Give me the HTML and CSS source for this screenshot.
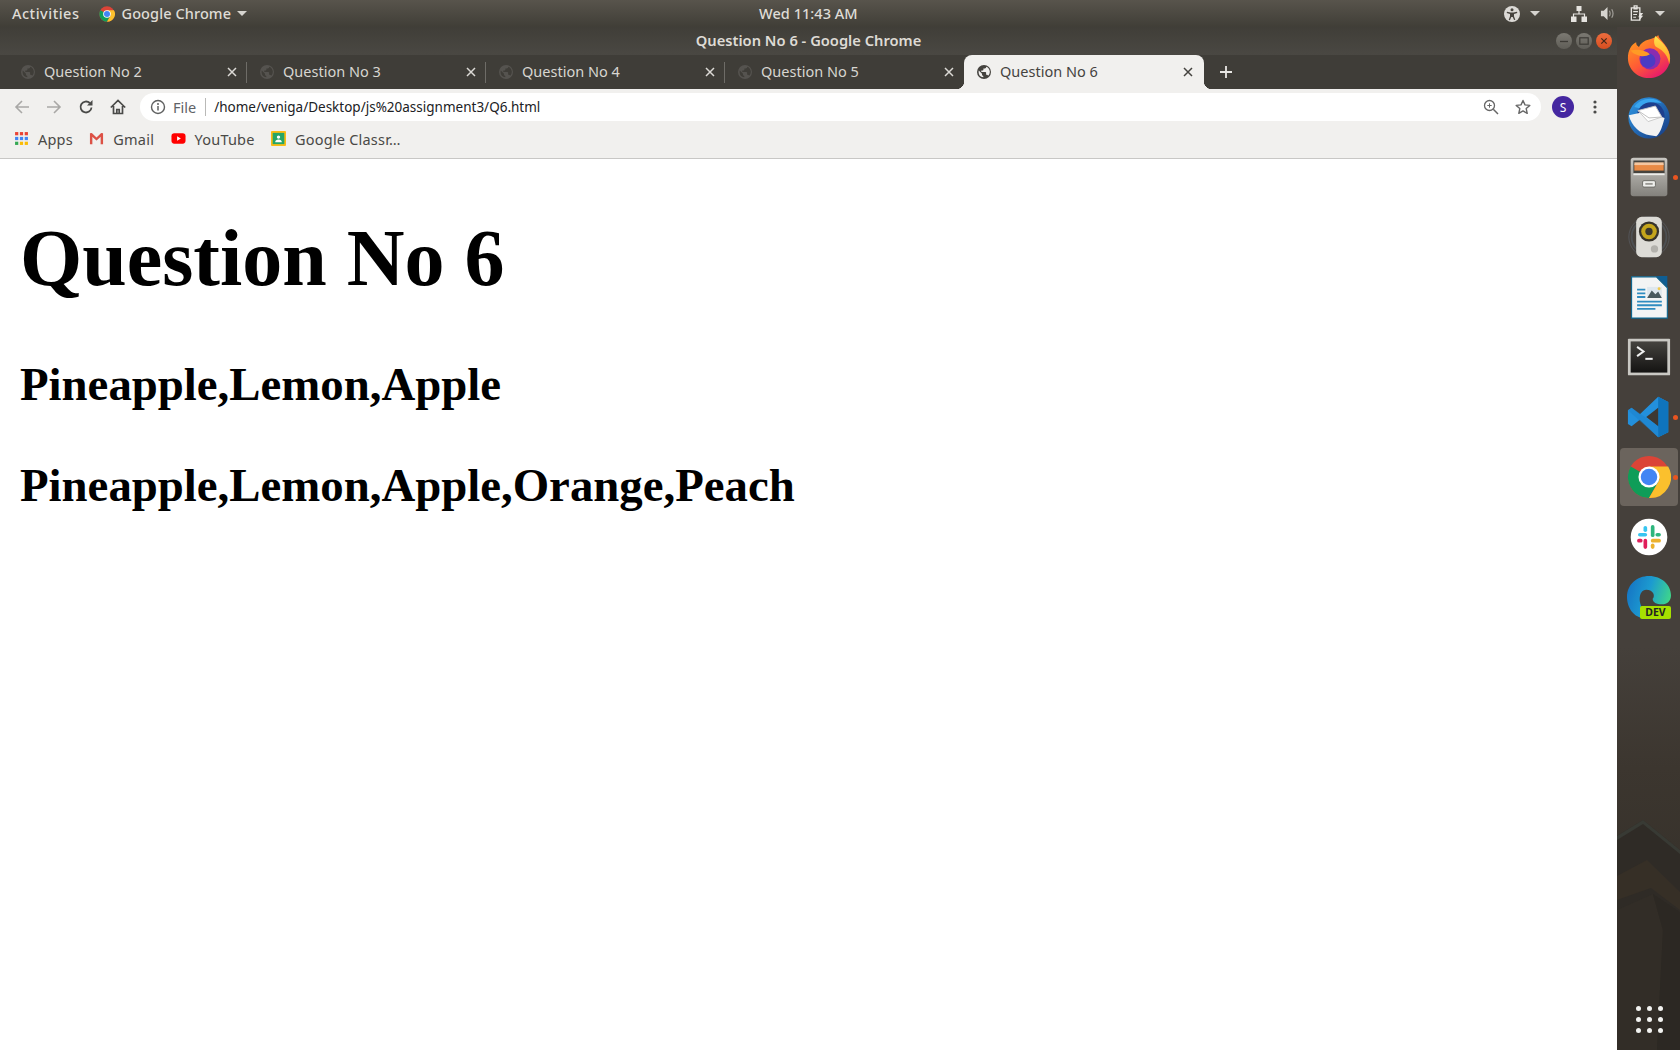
FILE: index.html
```html
<!DOCTYPE html>
<html lang="en">
<head>
<meta charset="utf-8">
<title>Question No 6</title>
<link rel="stylesheet" href="styles.css">
</head>
<body>
<svg class="defs" width="0" height="0" aria-hidden="true">
  <defs>
    <symbol id="chrome" viewBox="0 0 48 48">
      <circle cx="24" cy="24" r="23" fill="#db4437"/>
      <path d="M24 24 L4.1 12.5 A23 23 0 0 0 24 47 L35.5 27Z" fill="#0f9d58"/>
      <path d="M24 12.5 H44.9 A23 23 0 0 1 24 47 L35.5 27Z" fill="#fbc02d"/>
      <circle cx="24" cy="24" r="11.5" fill="#fff"/>
      <circle cx="24" cy="24" r="9" fill="#4285f4"/>
    </symbol>
    <symbol id="globe" viewBox="0 0 16 16">
      <path fill="currentColor" fill-rule="evenodd" d="M8 1a7 7 0 1 0 0 14A7 7 0 0 0 8 1zM2.6 8c0-.5.1-1 .2-1.400L6 9.800v.7c0 .8.6 1.400 1.300 1.400v1.400A5.400 5.400 0 0 1 2.600 8zm9.500 3.700c-.2-.6-.7-1-1.300-1h-.7V8.600c0-.4-.3-.7-.7-.7H5.300V6.500h1.400c.4 0 .7-.3.700-.7V4.400h1.400c.8 0 1.400-.6 1.400-1.400v-.3a5.400 5.400 0 0 1 1.900 9z"/>
    </symbol>
    <symbol id="close" viewBox="0 0 10 10">
      <path d="M1 1l8 8M9 1l-8 8" fill="none" stroke="currentColor" stroke-width="1.500"/>
    </symbol>
    <linearGradient id="ff" x1="0.1" y1="0.1" x2="0.7" y2="1">
      <stop offset="0" stop-color="#ff9a1f"/><stop offset="0.55" stop-color="#ff5a36"/><stop offset="1" stop-color="#e7186d"/>
    </linearGradient>
    <linearGradient id="ffy" x1="0.5" y1="0" x2="0.5" y2="1">
      <stop offset="0" stop-color="#ffe34d"/><stop offset="1" stop-color="#ff9a1f"/>
    </linearGradient>
    <linearGradient id="tb" x1="0" y1="0" x2="1" y2="1">
      <stop offset="0" stop-color="#2f9be8"/><stop offset="1" stop-color="#17387f"/>
    </linearGradient>
    <linearGradient id="steel" x1="0" y1="0" x2="0" y2="1">
      <stop offset="0" stop-color="#c9c7c2"/><stop offset="1" stop-color="#83817c"/>
    </linearGradient>
    <linearGradient id="edge" x1="0" y1="0.2" x2="1" y2="0.5">
      <stop offset="0" stop-color="#1573c4"/><stop offset="0.5" stop-color="#1c9bd0"/><stop offset="1" stop-color="#3fd68a"/>
    </linearGradient>
    <linearGradient id="term" x1="0" y1="0" x2="0" y2="1">
      <stop offset="0" stop-color="#45433f"/><stop offset="1" stop-color="#141312"/>
    </linearGradient>
  </defs>
</svg>

<div class="screen">
  <header class="topbar">
    <div class="top-left">
      <span class="top-label activities">Activities</span>
      <svg class="top-chrome"><use href="#chrome"/></svg>
      <span class="top-label app-name">Google Chrome</span>
      <span class="caret caret-app"></span>
    </div>
    <div class="top-label clock">Wed 11:43 AM</div>
    <div class="top-right">
      <svg class="tray tray-a11y" viewBox="0 0 16 16"><circle cx="8" cy="8" r="8" fill="#dcdad6"/><circle cx="8" cy="3.800" r="1.500" fill="#47443e"/><path d="M3 5.800l3.600.8h2.800l3.600-.8.300 1.200-3.300 1v2.200l1.300 3.500-1.200.4L8.700 11H7.300l-1.400 3.300-1.200-.4L6 10.200V8L2.700 7z" fill="#47443e"/></svg>
      <span class="caret caret-a11y"></span>
      <svg class="tray tray-net" viewBox="0 0 16 16"><path fill="none" stroke="#e6e4e0" stroke-width="1.200" d="M8 4v4M2.500 11V8h11v3"/><rect x="5.500" y="0" width="5" height="5" fill="#e6e4e0"/><rect x="0" y="10.500" width="5.500" height="5.500" fill="#e6e4e0"/><rect x="10.500" y="10.500" width="5.500" height="5.500" fill="#e6e4e0"/></svg>
      <svg class="tray tray-vol" viewBox="0 0 16 16"><path fill="#d6d4cf" d="M1 5h3l4-4v14l-4-4H1z"/><path d="M10 5c1 1.800 1 4.200 0 6M12.500 3.500c1.700 2.700 1.700 6.300 0 9" fill="none" stroke="#d6d4cf" stroke-width="1.300" opacity=".6"/></svg>
      <svg class="tray tray-clip" viewBox="0 0 14 18"><path fill="none" stroke="#e6e4e0" stroke-width="1.400" d="M1 3h9v13H1zM4 1h3v3H4z"/><path stroke="#e6e4e0" stroke-width="1.200" d="M3 7h5M3 10h4M3 13h3"/><path fill="#e6e4e0" d="M10 8.500h3.500l-2 3h2L9 17l1-4H8.500z"/></svg>
      <span class="caret caret-power"></span>
    </div>
  </header>

  <div class="desk">
    <main class="window">
      <div class="titlebar">
        <span></span>
        <div class="title">Question No 6 - Google Chrome</div>
        <div class="win-buttons">
          <span class="win-btn"><svg viewBox="0 0 16 16"><path d="M4 8.500h8" stroke="#3d3b36" stroke-width="1.300"/></svg></span>
          <span class="win-btn"><svg viewBox="0 0 16 16"><rect x="3.800" y="4.800" width="8.400" height="6.400" fill="none" stroke="#3d3b36" stroke-width="1.200"/></svg></span>
          <span class="win-btn win-close"><svg viewBox="0 0 16 16"><path d="M5.300 5.300l5.400 5.400M10.700 5.300l-5.400 5.400" stroke="#43281a" stroke-width="1.200"/></svg></span>
        </div>
      </div>

      <div class="tabstrip">
        <div class="tab"><svg class="favicon"><use href="#globe"/></svg><span class="tab-title">Question No 2</span><svg class="tab-close"><use href="#close"/></svg></div>
        <div class="tab"><svg class="favicon"><use href="#globe"/></svg><span class="tab-title">Question No 3</span><svg class="tab-close"><use href="#close"/></svg></div>
        <div class="tab"><svg class="favicon"><use href="#globe"/></svg><span class="tab-title">Question No 4</span><svg class="tab-close"><use href="#close"/></svg></div>
        <div class="tab tab-last"><svg class="favicon"><use href="#globe"/></svg><span class="tab-title">Question No 5</span><svg class="tab-close"><use href="#close"/></svg></div>
        <div class="tab tab-active"><svg class="favicon"><use href="#globe"/></svg><span class="tab-title">Question No 6</span><svg class="tab-close"><use href="#close"/></svg></div>
        <svg class="new-tab" viewBox="0 0 14 14"><path d="M7 1v12M1 7h12" stroke="#e8e7e4" stroke-width="1.800" fill="none"/></svg>
      </div>

      <div class="toolbar">
        <span class="tool"><svg viewBox="0 0 16 16"><path d="M15 8H2M8 2L2 8l6 6" fill="none" stroke="#a9a8a6" stroke-width="1.600"/></svg></span>
        <span class="tool"><svg viewBox="0 0 16 16"><path d="M1 8h13M8 2l6 6-6 6" fill="none" stroke="#a9a8a6" stroke-width="1.600"/></svg></span>
        <span class="tool"><svg viewBox="0 0 16 16"><path d="M13.500 8.500A5.500 5.500 0 1 1 11.800 4" fill="none" stroke="#4a4a48" stroke-width="1.800"/><path d="M14.500 1v5.500H9z" fill="#4a4a48"/></svg></span>
        <span class="tool"><svg viewBox="0 0 16 16"><path d="M.8 8.500L8 1.500l7.200 7M3.500 7v7.500h9V7M6.800 14.500v-4h2.400v4" fill="none" stroke="#4a4a48" stroke-width="1.700"/></svg></span>
        <div class="omnibox">
          <svg class="omni-info" viewBox="0 0 16 16"><circle cx="8" cy="8" r="6.500" fill="none" stroke="#5f6060" stroke-width="1.400"/><path d="M8 7v4.500" stroke="#5f6060" stroke-width="1.500"/><circle cx="8" cy="4.900" r="1" fill="#5f6060"/></svg>
          <span class="omni-scheme">File</span>
          <span class="omni-divider"></span>
          <span class="omni-url">/home/veniga/Desktop/js%20assignment3/Q6.html</span>
          <svg class="omni-icon omni-zoom" viewBox="0 0 16 16"><circle cx="6.500" cy="6.500" r="5" fill="none" stroke="#666" stroke-width="1.300"/><path d="M10.300 10.300L15 15" stroke="#666" stroke-width="1.500"/><path d="M4.300 6.500h4.400M6.500 4.300v4.400" stroke="#666" stroke-width="1"/></svg>
          <svg class="omni-icon omni-star" viewBox="0 0 16 16"><path d="M8 1.500l2 4.400 4.800.5-3.600 3.200 1 4.700L8 11.900l-4.200 2.400 1-4.700L1.200 6.400 6 5.900z" fill="none" stroke="#666" stroke-width="1.400" stroke-linejoin="round"/></svg>
        </div>
        <span class="tool"><span class="avatar">S</span></span>
        <span class="tool"><svg viewBox="0 0 16 16"><circle cx="8" cy="3" r="1.600" fill="#4a4a48"/><circle cx="8" cy="8" r="1.600" fill="#4a4a48"/><circle cx="8" cy="13" r="1.600" fill="#4a4a48"/></svg></span>
      </div>

      <nav class="bookmarks">
        <span class="bm">
          <svg class="bm-icon" viewBox="0 0 14 14">
            <rect x="1" y="1" width="3" height="3" fill="#ea4335"/><rect x="5.500" y="1" width="3" height="3" fill="#ea4335"/><rect x="10" y="1" width="3" height="3" fill="#ea4335"/>
            <rect x="1" y="5.500" width="3" height="3" fill="#4285f4"/><rect x="5.500" y="5.500" width="3" height="3" fill="#4285f4"/><rect x="10" y="5.500" width="3" height="3" fill="#4285f4"/>
            <rect x="1" y="10" width="3" height="3" fill="#34a853"/><rect x="5.500" y="10" width="3" height="3" fill="#fbbc05"/><rect x="10" y="10" width="3" height="3" fill="#fbbc05"/>
          </svg>Apps</span>
        <span class="bm">
          <svg class="bm-icon" viewBox="0 0 16 14"><path d="M1.500 13V2h1.700L8 6.500 12.800 2h1.700v11h-2.700V6.200L8 9.500 4.200 6.200V13z" fill="#e4e2e0"/><path d="M1 13V1.500L3 1l5 5 5-5 2 .5V13h-2.500V5L8 9.200 3.500 5v8z" fill="#dd5145"/></svg>Gmail</span>
        <span class="bm">
          <svg class="bm-icon" viewBox="0 0 16 14"><rect x="0.500" y="1.500" width="15" height="11" rx="3" fill="#f00"/><path d="M6.500 4.500l4 2.500-4 2.500z" fill="#fff"/></svg>YouTube</span>
        <span class="bm">
          <svg class="bm-icon" viewBox="0 0 16 16"><rect width="16" height="16" rx="1" fill="#f9bc15"/><rect x="1.800" y="2" width="12.400" height="12" fill="#25a667"/><circle cx="8" cy="6.500" r="1.800" fill="#fff"/><path d="M4.500 12c0-2 1.500-3 3.500-3s3.500 1 3.500 3z" fill="#fff"/></svg>Google Classr…</span>
      </nav>

      <section class="page">
        <h1>Question No 6</h1>
        <h3>Pineapple,Lemon,Apple</h3>
        <h3>Pineapple,Lemon,Apple,Orange,Peach</h3>
      </section>
    </main>

    <aside class="dock">
      <svg class="dock-wall" viewBox="0 0 63 290" preserveAspectRatio="none" aria-hidden="true">
        <path d="M0 76 L26 60 L63 90 V290 H0Z" fill="#2f2b26"/>
        <path d="M0 76 L26 60 L63 90 L63 94 L26 64 L0 80Z" fill="#383a34"/>
        <path d="M0 116 L30 100 L63 132 V150 L34 128 L0 140Z" fill="#362f26"/>
        <path d="M0 150 L36 134 L46 170 L40 290 H0Z" fill="#322d27"/>
        <path d="M36 134 L63 152 V290 H40 L46 170Z" fill="#2c2823"/>
      </svg>
      <div class="dock-item"><svg viewBox="0 0 48 48">
        <path d="M24 5c8-2 10-5 10-5 1 4 4 6 7 10 4 5 6 10 6 15 0 12-10 22-23 22S1 37 1 25C1 17 5 10 10 8c0 3 1 4 3 5 2-4 6-7 11-8z" fill="url(#ff)"/>
        <path d="M31 1c5 5 16 13 16 25 0 2-.5 4-1 6-1-9-6-15-14-19-3-2-3-8-1-12z" fill="url(#ffy)"/>
        <circle cx="25" cy="26" r="11.500" fill="#8a2cb0"/>
        <circle cx="23" cy="28" r="8" fill="#4b3bc4"/>
        <path d="M4 17c4-1 10-2 16 1 3 1 5 3 5 3-3 2-9 3-13 1-4-1-7-3-8-5z" fill="#ff9b25"/>
      </svg></div>
      <div class="dock-item"><svg viewBox="0 0 48 48">
        <circle cx="24" cy="25" r="22.500" fill="url(#tb)"/>
        <path d="M8 13C14 3 30 1 38 9c-8-2-18 0-22 6z" fill="#39a6ef"/>
        <circle cx="26" cy="23" r="15" fill="#1d3f8e"/>
        <path d="M2 22l19-4 20 7c-2 8-5 17-9 20l-7-1C14 42 5 34 2 22z" fill="#f2f2f2"/>
        <path d="M12 17l19-5 7 12-15 5z" fill="#fff" stroke="#c7c7c7" stroke-width="1"/>
        <path d="M12 17l12 8 14-1" fill="none" stroke="#bbb" stroke-width="1"/>
      </svg></div>
      <div class="dock-item dock-running"><svg viewBox="0 0 48 48">
        <rect x="4" y="3" width="40" height="42" rx="3" fill="url(#steel)"/>
        <rect x="7" y="6" width="34" height="14" fill="#45433e"/>
        <rect x="8" y="10" width="32" height="7" fill="#e98a45"/>
        <rect x="8" y="8" width="32" height="3" fill="#f5c6a0"/>
        <rect x="7" y="20" width="34" height="2" fill="#eeeeea"/>
        <rect x="17" y="28" width="14" height="7" rx="1.500" fill="#efefec" stroke="#6a6964"/>
        <rect x="20" y="30.500" width="8" height="2" fill="#9a9994"/>
      </svg></div>
      <div class="dock-item"><svg viewBox="0 0 48 48">
        <circle cx="24" cy="24" r="22" fill="none" stroke="#5a6068" stroke-width="1" opacity=".7"/>
        <circle cx="24" cy="24" r="19" fill="none" stroke="#5a6a78" stroke-width="2" opacity=".4"/>
        <rect x="10" y="2" width="28" height="44" rx="6" fill="#dcdbd6"/>
        <circle cx="24" cy="18" r="11" fill="#36332c"/>
        <circle cx="24" cy="18" r="8.500" fill="#c4a51c"/>
        <circle cx="24" cy="18" r="4" fill="#3b382f"/>
        <circle cx="30" cy="37" r="4" fill="#b2b1ac"/>
      </svg></div>
      <div class="dock-item"><svg viewBox="0 0 48 48">
        <path d="M5 2h27l12 12v33H5z" fill="#f3f4f4" stroke="#0d6690" stroke-width="1.200"/>
        <path d="M32 1h12v12z" fill="#0f5e93"/>
        <rect x="22" y="13" width="16" height="12" fill="#dfe8ee"/>
        <path d="M22 25l5-8 4 4 3-3 4 7z" fill="#4a5a5e"/>
        <circle cx="35" cy="15" r="1.600" fill="#f2c94c"/>
        <path d="M11 15h9v2h-9zM11 19h9v2h-9zM11 23h9v2h-9zM11 28h27v2H11zM11 32h27v2H11zM11 36h20v2H11z" fill="#2f8cc0"/>
      </svg></div>
      <div class="dock-item"><svg viewBox="0 0 48 48">
        <rect x="1" y="4" width="46" height="40" rx="1" fill="#c9c8c3"/>
        <rect x="4" y="7" width="40" height="34" fill="url(#term)"/>
        <path d="M11 13l7 5-7 5" fill="none" stroke="#f0f0f0" stroke-width="2.200"/>
        <path d="M20 26h8" stroke="#f0f0f0" stroke-width="2.200"/>
      </svg></div>
      <div class="dock-item dock-running"><svg viewBox="0 0 48 48">
        <path d="M34 2l11 5.500v33L34 46 14 27 5 34l-4-2.500V16.500L5 14l9 7z" fill="#2390dc"/>
        <path d="M34 2l11 5.500v33L34 46z" fill="#0f74bd"/>
        <path d="M34 14v20l-13-10z" fill="#3d3833"/>
        <path d="M5 14l29 20v12L1 16.500z" fill="#1d82cc" opacity=".55"/>
      </svg></div>
      <div class="dock-item dock-running dock-active"><svg viewBox="0 0 48 48"><use href="#chrome"/></svg></div>
      <div class="dock-item"><svg viewBox="0 0 48 48">
        <circle cx="24" cy="24" r="20" fill="#fff"/>
        <rect x="12" y="19.500" width="10" height="4" rx="2" fill="#36c5f0"/><rect x="18" y="12" width="4" height="6.500" rx="2" fill="#36c5f0"/>
        <rect x="26" y="11" width="4" height="13" rx="2" fill="#2eb67d"/><rect x="31" y="19.500" width="6" height="4" rx="2" fill="#2eb67d"/>
        <rect x="26" y="26" width="11" height="4" rx="2" fill="#ecb22e"/><rect x="26" y="31" width="4" height="6" rx="2" fill="#ecb22e"/>
        <rect x="18" y="26" width="4" height="11" rx="2" fill="#e01e5a"/><rect x="11" y="26" width="6" height="4" rx="2" fill="#e01e5a"/>
      </svg></div>
      <div class="dock-item dock-edge">
        <svg viewBox="0 0 48 48">
          <path d="M0 24C0 10 11 1 24 1c14 0 24 10 24 21 0 6-4 10-10 10-6 0-10-2-10-6 3-3 1-10-7-10C12 16 10 34 24 44c-1 2-3 3-5 3C8 47 0 36 0 24z" fill="url(#edge)"/>
        </svg>
        <span class="dev-badge">DEV</span>
      </div>
      <div class="dock-grid">
        <i></i><i></i><i></i><i></i><i></i><i></i><i></i><i></i><i></i>
      </div>
    </aside>
  </div>
</div>
</body>
</html>
```

FILE: styles.css
```css
* { box-sizing: border-box; }
html, body { margin: 0; height: 100%; background: #fff; }
.defs { position: absolute; }
.screen {
  width: 1680px; height: 1050px; overflow: hidden;
  display: flex; flex-direction: column;
  font-family: "Noto Sans", "Open Sans", sans-serif;
}

/* GNOME top bar */
.topbar {
  height: 27px; flex: none;
  display: grid; grid-template-columns: 759px auto 1fr; align-items: center;
  background: linear-gradient(#58544c, #403e37);
}
.top-left, .top-right { display: flex; align-items: center; }
.top-label { font-size: 14.5px; font-weight: 500; color: #dfdcd6; white-space: nowrap; margin-top: -2px; }
.activities { margin-left: 12px; letter-spacing: 0.5px; }
.app-name { letter-spacing: 0.1px; }
.clock { letter-spacing: 0.05px; }
.top-chrome { width: 16px; height: 16px; margin: 0 6px 0 20px; }
.caret { width: 0; height: 0; border-left: 5px solid transparent; border-right: 5px solid transparent; border-top: 5px solid #d6d4cf; }
.caret-app { margin-left: 6px; }
.top-right { justify-content: flex-end; padding-right: 15px; }
.tray { display: block; }
.tray-a11y { width: 16px; height: 16px; }
.caret-a11y { margin: 0 31px 0 10px; }
.tray-net { width: 16px; height: 16px; }
.tray-vol { width: 15px; height: 15px; margin-left: 13px; }
.tray-clip { width: 14px; height: 17px; margin-left: 15px; }
.caret-power { margin-left: 11px; }

/* Desk: browser + dock */
.desk { flex: 1; display: flex; min-height: 0; }
.window { flex: 1; min-width: 0; display: flex; flex-direction: column; }

.titlebar {
  height: 28px; flex: none;
  display: grid; grid-template-columns: 1fr auto 1fr; align-items: center;
  background: linear-gradient(#403e38, #4a4843);
}
.title { font-size: 14.7px; font-weight: 600; color: #dedbd5; margin-top: -3px; }
.win-buttons { display: flex; justify-content: flex-end; gap: 4px; padding-right: 5px; }
.win-btn { width: 16px; height: 16px; border-radius: 50%; background: linear-gradient(#7b7972, #5f5d57); display: block; }
.win-btn svg { display: block; }
.win-close { background: linear-gradient(#ee6d3e, #d64e20); }

.tabstrip {
  height: 34px; flex: none; display: flex; align-items: center;
  padding-left: 8px; background: #3f3d38;
}
.tab {
  width: 239px; height: 100%; flex: none; padding-bottom: 1px;
  display: flex; align-items: center; padding-left: 12px;
  position: relative; color: #d8d6d1;
}
.tab::after {
  content: ""; position: absolute; right: 0; top: 7px; bottom: 6px; width: 1px; background: #6e6c67;
}
.tab-last::after { display: none; }
.favicon { width: 16px; height: 16px; margin-right: 8px; flex: none; color: #55534f; }
.tab-title { flex: 1; font-size: 14.5px; white-space: nowrap; margin-top: -2px; }
.tab-close { width: 10px; height: 10px; margin-right: 10px; flex: none; color: #dcdad6; }
.tab-active {
  background: #f1f0ee; color: #45433f; border-radius: 8px 8px 0 0; width: 240px;
}
.tab-active .tab-close { margin-right: 11px; }
.tab-active::after {
  top: auto; bottom: 0; right: -8px; width: 8px; height: 8px;
  background: radial-gradient(circle at 100% 0, transparent 8px, #f1f0ee 8.5px);
}
.tab-active::before {
  content: ""; position: absolute; bottom: 0; left: -8px; width: 8px; height: 8px;
  background: radial-gradient(circle at 0 0, transparent 8px, #f1f0ee 8.5px);
}
.tab-active .favicon { color: #45433f; }
.tab-active .tab-close { color: #45433f; }
.new-tab { width: 14px; height: 14px; margin-left: 15px; flex: none; }

.toolbar {
  height: 39px; flex: none; display: flex; align-items: center;
  padding: 0 6px 3px; background: #f1f0ee;
}
.tool { width: 32px; height: 28px; flex: none; display: flex; align-items: center; justify-content: center; }
.tool svg { width: 16px; height: 16px; }
.avatar {
  width: 22px; height: 22px; border-radius: 50%; background: #4527a0; color: #fff;
  font-size: 12px; display: flex; align-items: center; justify-content: center;
}
.omnibox {
  flex: 1; height: 28px; margin: 0 6px; padding: 0 10px 0 10px;
  display: flex; align-items: center; background: #fff; border-radius: 14px;
}
.omni-info { width: 16px; height: 16px; flex: none; }
.omni-scheme { font-size: 14.5px; color: #5f6368; margin-left: 7px; }
.omni-divider { width: 1px; height: 18px; background: #b9b9b7; margin: 0 8px 0 9px; }
.omni-url { flex: 1; font-size: 13.5px; color: #202124; white-space: nowrap; }
.omni-icon { width: 16px; height: 16px; flex: none; }
.omni-star { margin-left: 16px; }

.bookmarks {
  height: 31px; flex: none; display: flex; align-items: center; gap: 16.5px;
  padding: 0 0 9px 14px; background: #f1f0ee; border-bottom: 1px solid #c8c7c5;
}
.bm { display: flex; align-items: center; font-size: 14.5px; letter-spacing: 0.2px; color: #4a4946; white-space: nowrap; }
.bm-icon { width: 15px; height: 15px; margin-right: 9px; flex: none; }

/* Page content */
.page { flex: 1; padding: 0 20px; background: #fff; color: #000; font-family: "Liberation Serif", serif; overflow: hidden; }
.page h1 { font-size: 80px; margin: 53.6px 0; }
.page h3 { font-size: 46.8px; margin: 46.8px 0; }

/* Dock */
.dock {
  width: 63px; flex: none; position: relative; display: flex; flex-direction: column;
  background: linear-gradient(#45403b 0, #45403b 620px, #3c362f 740px, #2f2b25 100%);
}
.dock-wall { position: absolute; left: 0; bottom: 0; width: 63px; height: 290px; }
.dock-item {
  position: relative; height: 60px; flex: none;
  display: flex; align-items: center; justify-content: center;
}
.dock-item > svg { width: 44px; height: 44px; position: relative; }
.dock-running::after {
  content: ""; position: absolute; right: 2px; top: 50%; margin-top: -2.5px;
  width: 5px; height: 5px; border-radius: 50%; background: #e95420;
}
.dock-active::before {
  content: ""; position: absolute; left: 3px; top: 1px; width: 58px; height: 58px;
  border-radius: 4px; background: #6b645d;
}
.dev-badge {
  position: absolute; right: 9px; bottom: 8px; width: 31px; height: 13px; border-radius: 2px;
  background: #a6e000; color: #222; font-size: 10.5px; font-weight: 700; line-height: 13px; text-align: center;
}
.dock-grid {
  position: absolute; left: 18.5px; top: 979px;
  display: grid; grid-template-columns: repeat(3, 5px); gap: 6px;
}
.dock-grid i { width: 5px; height: 5px; border-radius: 50%; background: #f2f2f0; display: block; }
```
